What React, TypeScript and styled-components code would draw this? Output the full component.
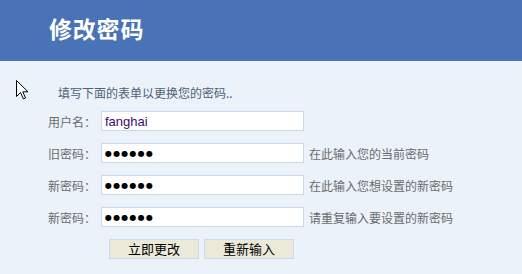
import React from "react";
import styled, { createGlobalStyle } from "styled-components";

const Global = createGlobalStyle`
  html, body { margin: 0; padding: 0; background: #ebf2fa; }
  body { font-family: "Liberation Sans", "Noto Sans CJK SC", sans-serif; }
`;

const Page = styled.div`
  position: relative;
  width: 522px;
  height: 274px;
  background: #ebf2fa;
  overflow: hidden;
`;

const Header = styled.header`
  height: 61px;
  background: #4a72b7;
  display: flex;
  align-items: center;
  padding-left: 49px;
  box-sizing: border-box;
`;

const Title = styled.h1`
  margin: 0;
  margin-top: -4px;
  color: #ffffff;
  font-family: "Noto Sans CJK SC", sans-serif;
  font-weight: 700;
  font-size: 23px;
  letter-spacing: 0.8px;
  line-height: 1;
`;

const Body = styled.main`
  display: flex;
  flex-direction: column;
  padding: 22px 0 0 48px;
  gap: 12px;
`;

const Intro = styled.p`
  margin: 0 0 -4px 10px;
  height: 20px;
  line-height: 20px;
  font-size: 12px;
  color: #4f5f75;
  font-family: "Noto Sans CJK SC", sans-serif;
`;

const Row = styled.div`
  display: flex;
  align-items: center;
  height: 20px;
`;

const Label = styled.label`
  width: 53px;
  flex: none;
  font-size: 12px;
  color: #6a6a6a;
  font-family: "Noto Sans CJK SC", sans-serif;
`;

const Field = styled.input<{ $secret?: boolean }>`
  width: 203px;
  height: 20px;
  box-sizing: border-box;
  border: 1px solid #c9daeb;
  background: #ffffff;
  padding: 0 0 0 3px;
  margin: 0;
  outline: none;
  font-family: ${(p) => (p.$secret ? `"DejaVu Sans", sans-serif` : `"Liberation Sans", sans-serif`)};
  font-size: ${(p) => (p.$secret ? "8px" : "13px")};
  letter-spacing: ${(p) => (p.$secret ? "1.2px" : "0")};
  color: ${(p) => (p.$secret ? "#000000" : "#3d0a6e")};
`;

const Hint = styled.span`
  margin-left: 5px;
  font-size: 12px;
  color: #6a6a6a;
  font-family: "Noto Sans CJK SC", sans-serif;
`;

const Actions = styled.div`
  display: flex;
  gap: 5px;
  padding-left: 61px;
`;

const Button = styled.button`
  width: 90px;
  height: 20px;
  box-sizing: border-box;
  border: 1px solid #cbdcee;
  background: #ece9d8;
  color: #000000;
  font-size: 13px;
  font-family: "Noto Sans CJK SC", sans-serif;
  padding: 0;
  line-height: 18px;
  cursor: pointer;
`;

const Cursor = styled.svg`
  position: absolute;
  left: 16px;
  top: 80px;
`;

const rows = [
  { label: "用户名：", value: "fanghai", secret: false, hint: "" },
  { label: "旧密码：", value: "●●●●●●", secret: true, hint: "在此输入您的当前密码" },
  { label: "新密码：", value: "●●●●●●", secret: true, hint: "在此输入您想设置的新密码" },
  { label: "新密码：", value: "●●●●●●", secret: true, hint: "请重复输入要设置的新密码" },
];

export default function App() {
  return (
    <Page>
      <Global />
      <Header>
        <Title>修改密码</Title>
      </Header>
      <Body>
        <Intro>填写下面的表单以更换您的密码..</Intro>
        {rows.map((r, i) => (
          <Row key={i}>
            <Label>{r.label}</Label>
            <Field $secret={r.secret} value={r.value} readOnly />
            {r.hint && <Hint>{r.hint}</Hint>}
          </Row>
        ))}
        <Actions>
          <Button>立即更改</Button>
          <Button>重新输入</Button>
        </Actions>
      </Body>
      <Cursor width="13" height="20" viewBox="0 0 13 20">
        <path
          d="M0.5 0.5 L0.5 16.5 L4.5 12.5 L7.5 19 L9.5 18 L6.8 11.8 L12 11.8 Z"
          fill="#ffffff"
          stroke="#000000"
          strokeWidth="1"
          strokeLinejoin="miter"
        />
      </Cursor>
    </Page>
  );
}
